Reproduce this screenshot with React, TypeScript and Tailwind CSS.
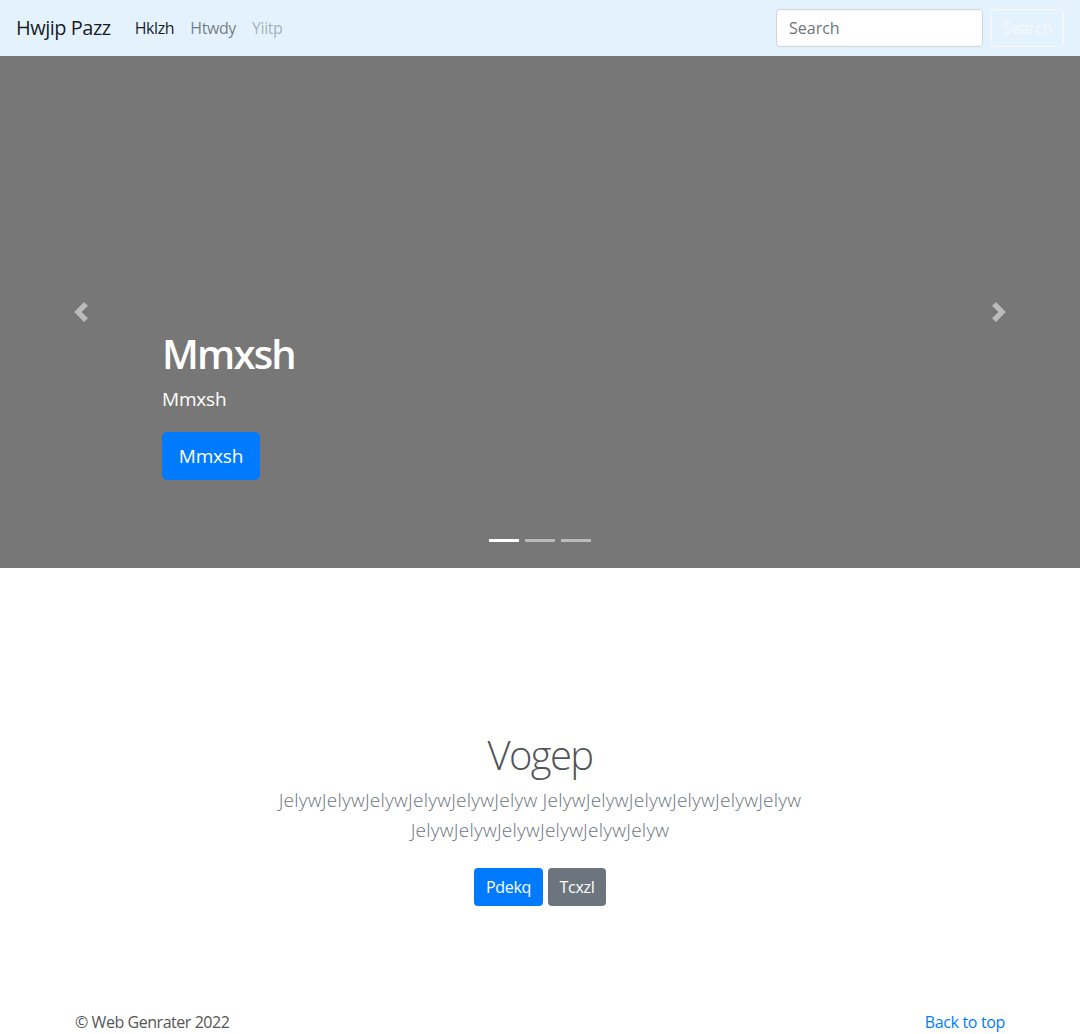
import React from "react";

const font = { fontFamily: '"Open Sans", "Noto Sans", Arial, sans-serif' };

const PrevIcon = () => (
  <svg width="20" height="20" viewBox="0 0 8 8" fill="#fff">
    <path d="M5.25 0l-4 4 4 4 1.5-1.5L4.25 4l2.5-2.5L5.25 0z" />
  </svg>
);

const NextIcon = () => (
  <svg width="20" height="20" viewBox="0 0 8 8" fill="#fff">
    <path d="M2.75 0l-1.5 1.5L3.75 4l-2.5 2.5L2.75 8l4-4-4-4z" />
  </svg>
);

export default function App() {
  return (
    <div className="bg-white text-[#212529] text-base" style={font}>
      {/* Navbar */}
      <nav className="h-[56px] bg-[#e3f2fd] flex items-center px-4">
        <a className="text-[20px] leading-[30px] text-black/90 mr-4 tracking-[-0.5px]">Hwjip Pazz</a>
        <div className="flex items-center">
          <a className="px-2 text-black/90 tracking-[-0.4px]">Hklzh</a>
          <a className="px-2 text-black/50 tracking-[-0.4px]">Htwdy</a>
          <a className="px-2 text-black/30 tracking-[-0.4px]">Yiitp</a>
        </div>
        <div className="ml-auto flex items-center">
          <input
            placeholder="Search"
            className="w-[207px] h-[38px] bg-white border border-[#ced4da] rounded-[4px] px-3 text-base text-[#495057] placeholder:text-[#6c757d] outline-none"
          />
          <button className="ml-2 h-[38px] w-[73px] border border-[#f8f9fa] rounded-[4px] text-[#f8f9fa] text-base tracking-[-0.3px]">
            Search
          </button>
        </div>
      </nav>

      {/* Carousel */}
      <div className="relative h-[512px] bg-[#777777] flex items-end pl-[15%] pb-[88px]">
        <div className="text-white">
          <h1 className="text-[40px] leading-[48px] font-semibold tracking-[-1.8px] mb-[7px]">Mmxsh</h1>
          <p className="text-[19px] leading-[28px] mb-[19px] tracking-[-0.2px]">Mmxsh</p>
          <button className="bg-[#007bff] text-white text-[19px] rounded-[5px] h-[48px] w-[98px] tracking-[-0.2px]">
            Mmxsh
          </button>
        </div>
        <div className="absolute left-0 top-0 bottom-0 w-[15%] flex items-center justify-center opacity-50">
          <PrevIcon />
        </div>
        <div className="absolute right-0 top-0 bottom-0 w-[15%] flex items-center justify-center opacity-50">
          <NextIcon />
        </div>
        <div className="absolute left-0 right-0 bottom-[26px] flex justify-center gap-[6px]">
          <span className="w-[30px] h-[3px] bg-white" />
          <span className="w-[30px] h-[3px] bg-white/50" />
          <span className="w-[30px] h-[3px] bg-white/50" />
        </div>
      </div>

      {/* Jumbotron */}
      <section className="pt-[163px] text-center">
        <div className="w-[610px] mx-auto">
          <h2 className="text-[40px] leading-[48px] font-light tracking-[-1.6px] text-[#212529]/80 mb-[6px]">Vogep</h2>
          <p className="text-[19px] leading-[30px] font-light tracking-[0.25px] text-[#6c757d] mb-[23px]">
            JelywJelywJelywJelywJelywJelyw JelywJelywJelywJelywJelywJelyw JelywJelywJelywJelywJelywJelyw
          </p>
          <div className="flex justify-center gap-[5px]">
            <button className="bg-[#007bff] text-white h-[38px] w-[69px] rounded-[4px] text-base tracking-[-0.3px]">Pdekq</button>
            <button className="bg-[#6c757d] text-white h-[38px] w-[58px] rounded-[4px] text-base tracking-[-0.3px]">Tcxzl</button>
          </div>
        </div>
      </section>

      {/* Footer */}
      <footer className="w-[960px] mx-auto px-[15px] pt-[104px] pb-12 flex justify-between">
        <p className="leading-6 text-[#555] tracking-[-0.45px]">© Web Genrater 2022</p>
        <a className="leading-6 text-[#007bff] tracking-[-0.35px]">Back to top</a>
      </footer>
    </div>
  );
}
